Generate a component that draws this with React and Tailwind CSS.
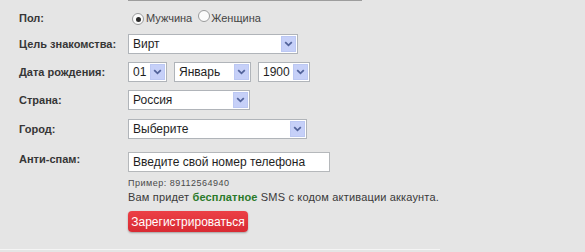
import React from "react";

function Chevron() {
  return (
    <svg width="9" height="6" viewBox="0 0 9 6">
      <path d="M1.2 1.2 L4.5 4.3 L7.8 1.2" fill="none" stroke="#52639a" strokeWidth="1.8" />
    </svg>
  );
}

function Select({ w, text }) {
  return (
    <div
      className="flex items-center h-[20px] bg-white border border-[#b0b4b9] pl-[4px] pr-[1px] box-border"
      style={{ width: w }}
    >
      <span className="flex-1 text-[12px] leading-[18px] text-[#1e1e1e] whitespace-nowrap overflow-hidden">{text}</span>
      <span className="flex items-center justify-center w-[15px] h-[16px] bg-[#c6d0f8] border border-[#bcc8f3]">
        <Chevron />
      </span>
    </div>
  );
}

function Radio({ checked }) {
  return (
    <span className="inline-flex items-center justify-center w-[12px] h-[12px] rounded-full border border-[#9a9b9c] bg-[#fbfbfb]">
      {checked && <span className="w-[5px] h-[5px] rounded-full bg-[#2a2a2a]" />}
    </span>
  );
}

function Label({ children, extra = "" }) {
  return (
    <div className={"w-[109px] shrink-0 text-[11px] font-bold text-[#363636] " + extra}>{children}</div>
  );
}

export default function App() {
  return (
    <div
      className="w-[585px] h-[252px] bg-[#e5e5e5] overflow-hidden"
      style={{ fontFamily: '"Liberation Sans", Arial, sans-serif' }}
    >
      <div className="ml-[128px] w-[234px] h-px bg-[#9d9d9d]" />
      <div className="pl-[19px]">
        <div className="flex items-center h-[20px] mt-[7px]">
          <Label>Пол:</Label>
          <div className="flex items-center text-[11px] text-[#444444]">
            <span className="ml-[4px]"><Radio checked /></span>
            <span className="ml-[2px]">Мужчина</span>
            <span className="ml-[6px]"><Radio /></span>
            <span className="ml-[1px]">Женщина</span>
          </div>
        </div>
        <div className="flex items-center h-[20px] mt-[6px]">
          <Label>Цель знакомства:</Label>
          <Select w={170} text="Вирт" />
        </div>
        <div className="flex items-center h-[20px] mt-[8px]">
          <Label>Дата рождения:</Label>
          <div className="flex items-center gap-[7px]">
            <Select w={39} text="01" />
            <Select w={77} text="Январь" />
            <Select w={52} text="1900" />
          </div>
        </div>
        <div className="flex items-center h-[20px] mt-[8px]">
          <Label>Страна:</Label>
          <Select w={122} text="Россия" />
        </div>
        <div className="flex items-center h-[20px] mt-[9px]">
          <Label>Город:</Label>
          <Select w={179} text="Выберите" />
        </div>
        <div className="flex items-start mt-[13px]">
          <Label extra="leading-[14px]">Анти-спам:</Label>
          <div className="flex flex-col">
            <div className="w-[202px] h-[20px] bg-white border border-[#b5b8bb] box-border pl-[4px] text-[12px] leading-[18px] text-[#1e1e1e] whitespace-nowrap">
              Введите свой номер телефона
            </div>
            <div className="mt-[6px] text-[9px] leading-[10px] text-[#4a4a4a] tracking-[0.5px]">Пример: 89112564940</div>
            <div className="mt-[2px] text-[11px] leading-[14px] text-[#3a3a3a] tracking-[0.17px] whitespace-nowrap">
              Вам придет <span className="font-bold text-[#2a7a2a]">бесплатное</span> SMS с кодом активации аккаунта.
            </div>
            <div className="mt-[7px] w-[120px] h-[21px] rounded-[4px] bg-gradient-to-b from-[#ec4046] to-[#d82a32] shadow-[0_1px_2px_rgba(0,0,0,0.3)] flex items-center justify-center text-white text-[12px]">
              Зарегистрироваться
            </div>
          </div>
        </div>
      </div>
      <div className="mt-[17px] w-[440px] h-px bg-[#f5f5f5]" />
    </div>
  );
}
